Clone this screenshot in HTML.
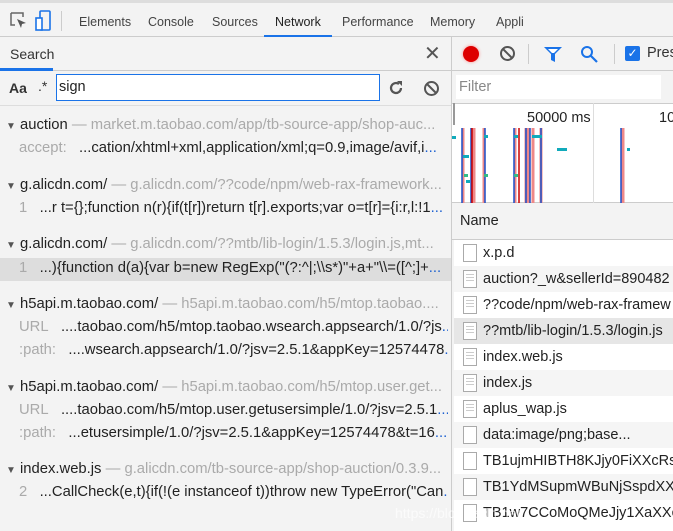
<!DOCTYPE html>
<html><head><meta charset="utf-8"><style>
*{box-sizing:border-box;margin:0;padding:0}
html,body{width:673px;height:531px;overflow:hidden}
body{background:#f3f3f3;font-family:"Liberation Sans","DejaVu Sans",sans-serif;font-size:14px;color:#333;position:relative}
.abs{position:absolute}
.tabs{left:0;top:0;width:673px;height:37px;background:#f3f3f3;border-top:3px solid #ddd;border-bottom:1px solid #ccc}
.tab{position:absolute;top:12px;color:#444;font-size:12.5px}
.line{position:absolute;white-space:nowrap;overflow:hidden;font-size:14.8px;color:#222}
.g{color:#aaa}
.b{color:#1a5fd0}
.row{position:absolute;left:454px;width:219px;height:26px;white-space:nowrap;overflow:hidden;font-size:14.5px;color:#222;padding-left:29px;line-height:26px}
.ic{position:absolute;left:9px;top:4px;width:14px;height:18px;border:1px solid #aaa;background:#fff}
.ic.d::after{content:"";position:absolute;left:2px;top:3px;width:8px;height:9px;background:repeating-linear-gradient(#ccc 0 1px,transparent 1px 3px)}
</style></head><body>
<div class="abs tabs">
 <svg class="abs" style="left:10px;top:9px" width="18" height="18" viewBox="0 0 18 18"><path d="M1 1h12v4M1 1v12h4" fill="none" stroke="#666" stroke-width="1.5"/><path d="M7 7l9 4-4 1-1 4z" fill="#555"/></svg>
 <svg class="abs" style="left:35px;top:7px" width="16" height="22" viewBox="0 0 16 22"><rect x="5" y="1" width="10" height="19" rx="1" fill="none" stroke="#1a73e8" stroke-width="1.6"/><rect x="1" y="8" width="6" height="12" fill="#fff" stroke="#1a73e8" stroke-width="1.6"/></svg>
 <div class="abs" style="left:61px;top:8px;width:1px;height:20px;background:#ccc"></div>
 <span class="tab" style="left:79px">Elements</span>
 <span class="tab" style="left:148px">Console</span>
 <span class="tab" style="left:212px">Sources</span>
 <span class="tab" style="left:275px;color:#222">Network</span>
 <div class="abs" style="left:264px;top:32px;width:68px;height:3px;background:#1a73e8"></div>
 <span class="tab" style="left:342px">Performance</span>
 <span class="tab" style="left:430px">Memory</span>
 <span class="tab" style="left:496px">Appli</span>
</div>
<div class="abs" style="left:0;top:37px;width:451px;height:34px;border-bottom:1px solid #ccc;background:#f3f3f3"></div>
<span class="abs" style="left:10px;top:46px;font-size:14px;color:#333">Search</span>
<div class="abs" style="left:0;top:68px;width:53px;height:3px;background:#1a73e8"></div>
<span class="abs" style="left:424px;top:41px;font-size:20px;color:#555">✕</span>
<div class="abs" style="left:451px;top:37px;width:1px;height:494px;background:#ccc"></div>
<span class="abs" style="left:9px;top:80px;font-weight:bold;font-size:14px;color:#333">Aa</span>
<span class="abs" style="left:38px;top:78px;font-size:14px;color:#333">.*</span>
<div class="abs" style="left:56px;top:74px;width:324px;height:27px;border:1px solid #1a73e8;background:#fff;padding:4px 2px;font-size:14.5px;color:#222">sign</div>
<svg class="abs" style="left:388px;top:80px" width="16" height="16" viewBox="0 0 16 16"><path d="M13 8a5 5 0 1 1-2-4" fill="none" stroke="#555" stroke-width="2.2"/><path d="M9 1h5v5z" fill="#555"/></svg>
<svg class="abs" style="left:423px;top:80px" width="17" height="17" viewBox="0 0 17 17"><circle cx="8.5" cy="8.5" r="6.5" fill="none" stroke="#555" stroke-width="2"/><path d="M4 4l9 9" stroke="#555" stroke-width="2"/></svg>
<div class="abs" style="left:0;top:105px;width:451px;height:1px;background:#ddd"></div>
<div class="line" style="left:6px;top:117px;width:442px"><span style="font-size:10px;color:#555">▼</span> auction <span class="g">— market.m.taobao.com/app/tb-source-app/shop-auc...</span></div>
<div class="line" style="left:19px;top:140px;width:429px"><span class="g">accept:</span>&nbsp;&nbsp; ...cation/xhtml+xml,application/xml;q=0.9,image/avif,i<span class="b">...</span></div>
<div class="line" style="left:6px;top:177px;width:442px"><span style="font-size:10px;color:#555">▼</span> g.alicdn.com/ <span class="g">— g.alicdn.com/??code/npm/web-rax-framework...</span></div>
<div class="line" style="left:19px;top:200px;width:429px"><span class="g">1</span>&nbsp;&nbsp; ...r t={};function n(r){if(t[r])return t[r].exports;var o=t[r]={i:r,l:!1<span class="b">...</span></div>
<div class="line" style="left:6px;top:236px;width:442px"><span style="font-size:10px;color:#555">▼</span> g.alicdn.com/ <span class="g">— g.alicdn.com/??mtb/lib-login/1.5.3/login.js,mt...</span></div>
<div class="abs" style="left:0;top:258px;width:451px;height:23px;background:#ddd"></div>
<div class="line" style="left:19px;top:260px;width:429px"><span class="g">1</span>&nbsp;&nbsp; ...){function d(a){var b=new RegExp("(?:^|;\\s*)"+a+"\\=([^;]+<span class="b">...</span></div>
<div class="line" style="left:6px;top:296px;width:442px"><span style="font-size:10px;color:#555">▼</span> h5api.m.taobao.com/ <span class="g">— h5api.m.taobao.com/h5/mtop.taobao....</span></div>
<div class="line" style="left:19px;top:319px;width:429px"><span class="g">URL</span>&nbsp;&nbsp; ....taobao.com/h5/mtop.taobao.wsearch.appsearch/1.0/?js<span class="b">...</span></div>
<div class="line" style="left:19px;top:342px;width:429px"><span class="g">:path:</span>&nbsp;&nbsp; ....wsearch.appsearch/1.0/?jsv=2.5.1&amp;appKey=12574478<span class="b">...</span></div>
<div class="line" style="left:6px;top:379px;width:442px"><span style="font-size:10px;color:#555">▼</span> h5api.m.taobao.com/ <span class="g">— h5api.m.taobao.com/h5/mtop.user.get...</span></div>
<div class="line" style="left:19px;top:402px;width:429px"><span class="g">URL</span>&nbsp;&nbsp; ....taobao.com/h5/mtop.user.getusersimple/1.0/?jsv=2.5.1<span class="b">...</span></div>
<div class="line" style="left:19px;top:425px;width:429px"><span class="g">:path:</span>&nbsp;&nbsp; ...etusersimple/1.0/?jsv=2.5.1&amp;appKey=12574478&amp;t=16<span class="b">...</span></div>
<div class="line" style="left:6px;top:461px;width:442px"><span style="font-size:10px;color:#555">▼</span> index.web.js <span class="g">— g.alicdn.com/tb-source-app/shop-auction/0.3.9...</span></div>
<div class="line" style="left:19px;top:484px;width:429px"><span class="g">2</span>&nbsp;&nbsp; ...CallCheck(e,t){if(!(e instanceof t))throw new TypeError("Can<span class="b">...</span></div>
<div class="abs" style="left:452px;top:37px;width:221px;height:34px;border-bottom:1px solid #ccc"></div>
<div class="abs" style="left:463px;top:46px;width:16px;height:16px;border-radius:50%;background:#d00;box-shadow:0 0 3px #f88"></div>
<svg class="abs" style="left:499px;top:45px" width="17" height="17" viewBox="0 0 17 17"><circle cx="8.5" cy="8.5" r="6.5" fill="none" stroke="#555" stroke-width="2"/><path d="M4 4l9 9" stroke="#555" stroke-width="2"/></svg>
<div class="abs" style="left:528px;top:44px;width:1px;height:20px;background:#ccc"></div>
<svg class="abs" style="left:543px;top:46px" width="20" height="17" viewBox="0 0 20 17"><path d="M1 1h18l-7 7v8l-4-2V8z" fill="#1a73e8"/><path d="M5 3h10l-4 4H9z" fill="#fff"/></svg>
<svg class="abs" style="left:580px;top:45px" width="18" height="18" viewBox="0 0 18 18"><circle cx="7" cy="7" r="5" fill="none" stroke="#1a73e8" stroke-width="2"/><path d="M11 11l6 6" stroke="#1a73e8" stroke-width="2.2"/></svg>
<div class="abs" style="left:614px;top:44px;width:1px;height:20px;background:#ccc"></div>
<div class="abs" style="left:625px;top:46px;width:15px;height:15px;border-radius:2px;background:#1a73e8;color:#fff;font-size:12px;line-height:15px;text-align:center">✓</div>
<span class="abs" style="left:647px;top:45px;font-size:14.5px">Pres</span>
<div class="abs" style="left:456px;top:75px;width:205px;height:24px;background:#fff;color:#888;padding:4px 3px;font-size:14.5px">Filter</div>
<div class="abs" style="left:452px;top:103px;width:221px;height:100px;background:#fff;border-top:1px solid #ccc;border-bottom:1px solid #ccc"></div>
<div class="abs" style="left:593px;top:103px;width:1px;height:100px;background:#ddd"></div>
<div class="abs" style="left:453px;top:103px;width:2px;height:22px;background:#999"></div>
<span class="abs" style="left:527px;top:110px;font-size:14.5px;color:#222">50000 ms</span>
<span class="abs" style="left:659px;top:110px;font-size:14.5px;color:#222">10</span>
<svg class="abs" style="left:452px;top:128px" width="221" height="75">
<g>
<path d="M11 0v75M22 0v75M32 0v75M63 0v75M74 0v75M76 0v75M81 0v75M89 0v75M171 0v75" stroke="#e88" stroke-width="3"/>
<path d="M10 0v75M19 0v75M33 0v75M62 0v75M74 0v75M78 0v75M89 0v75M169 0v75" stroke="#1a4fc8" stroke-width="1.5"/>
<path d="M20 0v75M67 0v75" stroke="#c00" stroke-width="1.5"/>
</g>
<g fill="#1ab">
<rect x="0" y="8" width="4" height="3"/><rect x="32" y="7" width="4" height="3"/><rect x="62" y="7" width="4" height="3"/><rect x="80" y="7" width="10" height="3"/><rect x="105" y="20" width="10" height="3"/><rect x="11" y="27" width="6" height="3"/><rect x="14" y="52" width="4" height="3"/><rect x="175" y="20" width="3" height="3"/>
</g>
<g fill="#3b8"><rect x="32" y="46" width="4" height="3"/><rect x="62" y="46" width="4" height="3"/><rect x="12" y="46" width="4" height="3"/></g>
</svg>
<div class="abs" style="left:452px;top:203px;width:221px;height:37px;background:#f3f3f3;border-bottom:1px solid #ccc"></div>
<span class="abs" style="left:460px;top:213px;font-size:14.5px;color:#222">Name</span>
<div class="row" style="top:240px;background:#fff"><i class="ic"></i>x.p.d</div>
<div class="row" style="top:266px;background:#f5f5f5"><i class="ic d"></i>auction?_w&amp;sellerId=890482</div>
<div class="row" style="top:292px;background:#fff"><i class="ic d"></i>??code/npm/web-rax-framew</div>
<div class="row" style="top:318px;background:#e6e6e6"><i class="ic d"></i>??mtb/lib-login/1.5.3/login.js</div>
<div class="row" style="top:344px;background:#fff"><i class="ic d"></i>index.web.js</div>
<div class="row" style="top:370px;background:#f5f5f5"><i class="ic d"></i>index.js</div>
<div class="row" style="top:396px;background:#fff"><i class="ic d"></i>aplus_wap.js</div>
<div class="row" style="top:422px;background:#f5f5f5"><i class="ic"></i>data:image/png;base...</div>
<div class="row" style="top:448px;background:#fff"><i class="ic"></i>TB1ujmHIBTH8KJjy0FiXXcRsX</div>
<div class="row" style="top:474px;background:#f5f5f5"><i class="ic"></i>TB1YdMSupmWBuNjSspdXXI</div>
<div class="row" style="top:500px;background:#fff;height:31px"><i class="ic"></i>TB1w7CCoMoQMeJjy1XaXXc</div>
<span class="abs" style="left:395px;top:505px;font-size:14px;color:#fff;opacity:.7">https://blog.csdn.net</span>
</body></html>
